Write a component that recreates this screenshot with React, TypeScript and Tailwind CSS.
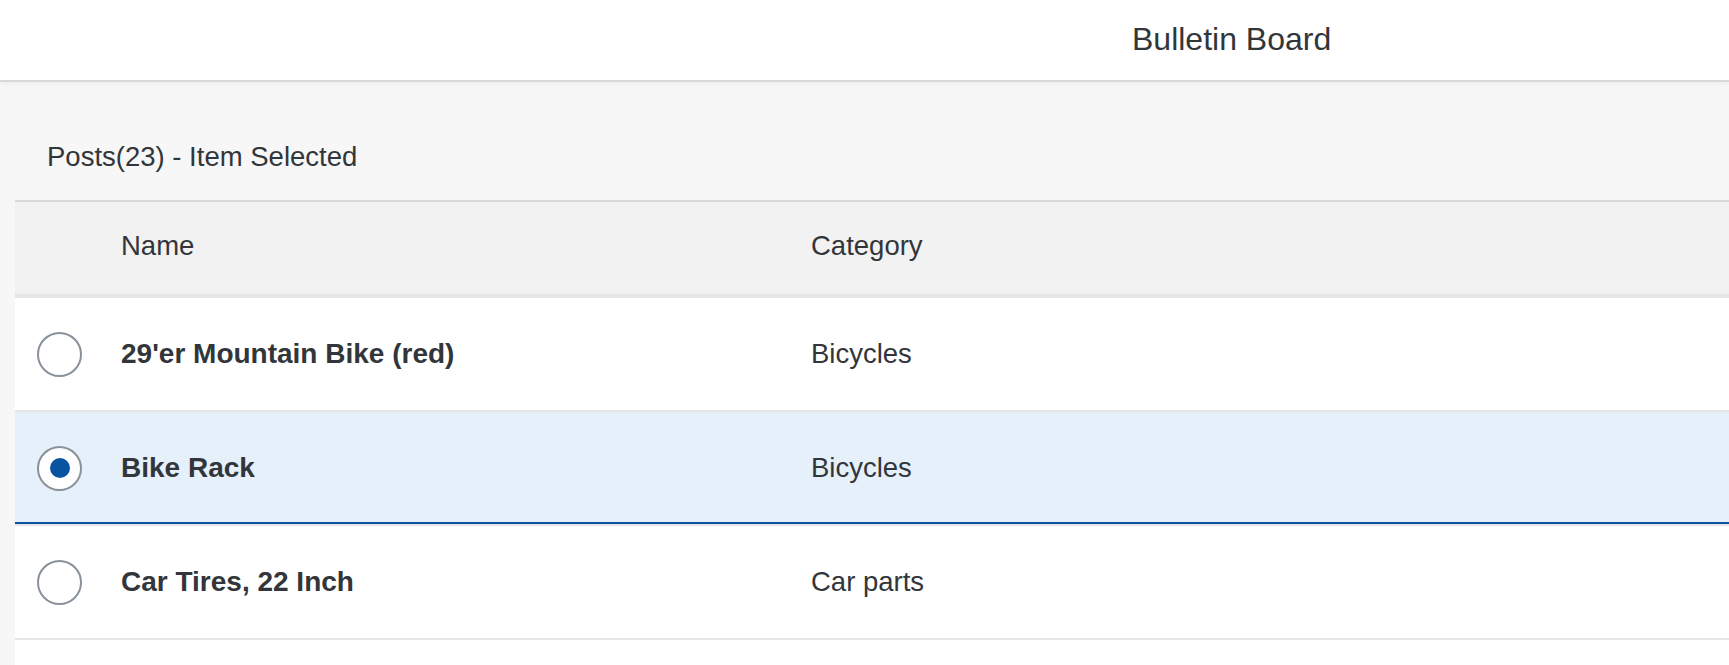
import React from "react";

type Row = { name: string; category: string; selected?: boolean };

const rows: Row[] = [
  { name: "29'er Mountain Bike (red)", category: "Bicycles" },
  { name: "Bike Rack", category: "Bicycles", selected: true },
  { name: "Car Tires, 22 Inch", category: "Car parts" },
];

function Radio({ checked }: { checked?: boolean }) {
  return (
    <div className="ml-[22px] flex h-[45px] w-[45px] items-center justify-center rounded-full border-2 border-[#89919a] bg-white">
      {checked && <div className="h-[20px] w-[20px] rounded-full bg-[#0854a0]" />}
    </div>
  );
}

export default function App() {
  return (
    <div className="h-screen overflow-hidden bg-[#f7f7f7] font-['Liberation_Sans',Arial,sans-serif] text-[#32363a]">
      <header className="relative z-10 flex h-[82px] items-center border-b-2 border-[#d9d9d9] bg-white pb-[3px] pl-[1132px] text-[32px] shadow-[0_2px_6px_rgba(0,0,0,0.05)]">
        Bulletin Board
      </header>
      <main className="pl-[15px] pt-[30px]">
        <div className="flex h-[88px] items-center pl-[32px] pt-[2px] text-[27.5px]">
          Posts(23) - Item Selected
        </div>
        <div className="border-t-2 border-[#d9d9d9]">
          <div className="grid h-[96px] grid-cols-[106px_690px_1fr] items-center border-b-4 border-[#e5e5e5] bg-[#f2f2f2] pb-[4px] text-[27.5px]">
            <div />
            <div>Name</div>
            <div>Category</div>
          </div>
          {rows.map((r) => (
            <div
              key={r.name}
              className={
                r.selected
                  ? "grid h-[114px] grid-cols-[106px_690px_1fr] items-center border-b-2 border-[#e5e5e5] bg-[#e5f0fa] text-[27.5px] shadow-[inset_0_-2px_0_#0854a0]"
                  : "grid h-[114px] grid-cols-[106px_690px_1fr] items-center border-b-2 border-[#e5e5e5] bg-white text-[27.5px]"
              }
            >
              <div>
                <Radio checked={r.selected} />
              </div>
              <div className="text-[28px] font-bold">{r.name}</div>
              <div>{r.category}</div>
            </div>
          ))}
          <div className="h-[114px] bg-white" />
        </div>
      </main>
    </div>
  );
}
